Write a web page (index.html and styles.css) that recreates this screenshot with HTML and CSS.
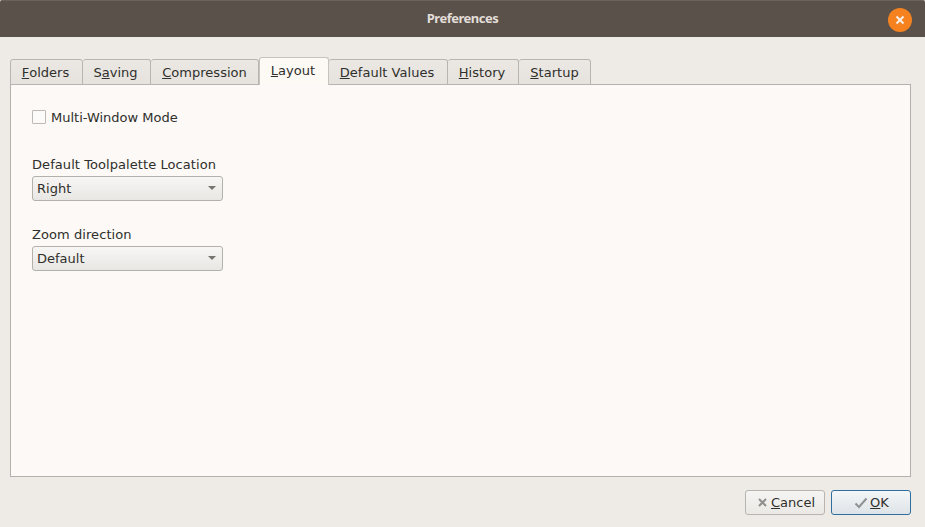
FILE: index.html
```html
<!DOCTYPE html>
<html lang="en">
<head>
<meta charset="utf-8">
<title>Preferences</title>
<link rel="stylesheet" href="styles.css">
</head>
<body>
<div class="window">
  <header class="titlebar">
    <span class="title">Preferences</span>
    <span class="close" aria-label="Close">
      <svg width="10" height="10" viewBox="0 0 10 10"><path d="M1.5 1.5 L8.5 8.5 M8.5 1.5 L1.5 8.5" stroke="#f4f0ea" stroke-width="2" fill="none"/></svg>
    </span>
  </header>
  <main class="content">
    <nav class="tabs">
      <span class="tab t1"><u>F</u>olders</span>
      <span class="tab t2">S<u>a</u>ving</span>
      <span class="tab t3"><u>C</u>ompression</span>
      <span class="tab t4 active"><u>L</u>ayout</span>
      <span class="tab t5"><u>D</u>efault Values</span>
      <span class="tab t6"><u>H</u>istory</span>
      <span class="tab t7"><u>S</u>tartup</span>
    </nav>
    <section class="panel">
      <label class="check"><span class="box"></span>Multi-Window Mode</label>
      <div class="field first">
        <div class="label">Default Toolpalette Location</div>
        <div class="combo"><span>Right</span><span class="arrow"></span></div>
      </div>
      <div class="field">
        <div class="label">Zoom direction</div>
        <div class="combo"><span>Default</span><span class="arrow"></span></div>
      </div>
    </section>
    <footer class="actions">
      <button class="btn">
        <svg width="11" height="11" viewBox="0 0 11 11"><path d="M2 2 L9 9 M9 2 L2 9" stroke="#8f8f8d" stroke-width="2" fill="none"/></svg>
        <span><u>C</u>ancel</span>
      </button>
      <button class="btn primary">
        <svg width="14" height="12" viewBox="0 0 14 12"><path d="M1.5 6.5 L5 10 L12.5 1.5" stroke="#8f9294" stroke-width="2" fill="none"/></svg>
        <span><u>O</u>K</span>
      </button>
    </footer>
  </main>
</div>
</body>
</html>
```
FILE: styles.css
```css
* { box-sizing: border-box; }
html, body { margin: 0; padding: 0; }
body {
  width: 925px;
  height: 527px;
  overflow: hidden;
  background: #eeebe7;
  font-family: "DejaVu Sans", sans-serif;
  font-size: 13px;
  color: #2f2f2b;
}
.window { display: flex; flex-direction: column; height: 527px; }
.titlebar {
  height: 37px;
  flex: none;
  display: flex;
  align-items: center;
  justify-content: center;
  position: relative;
  padding-bottom: 2px;
  background: #5a514b;
  border-top: 1px solid #6a625c;
  border-radius: 2px 2px 0 0;
}
.title {
  font-family: "Noto Sans", sans-serif;
  font-weight: 700;
  font-size: 13px;
  letter-spacing: -0.5px;
  color: #e2ddd8;
}
.close {
  position: absolute;
  right: 13px;
  top: 7px;
  width: 24px;
  height: 24px;
  border-radius: 50%;
  background: #f5821f;
  display: flex;
  align-items: center;
  justify-content: center;
}
.content {
  flex: 1;
  display: flex;
  flex-direction: column;
  padding: 20px 14px 12px 10px;
}
.tabs {
  display: flex;
  align-items: flex-end;
  height: 28px;
  flex: none;
  position: relative;
  z-index: 1;
  margin-bottom: -1px;
}
.tab {
  height: 26px;
  display: flex;
  align-items: center;
  justify-content: center;
  background: linear-gradient(#ebe8e4, #e6e3df);
  border: 1px solid #b8b4af;
  border-left-width: 0;
  border-radius: 3px 3px 0 0;
  padding: 1px 2px 0 0;
  letter-spacing: 0.03px;
  white-space: nowrap;
}
.t1 { width: 73px; border-left-width: 1px; }
.t2 { width: 68px; }
.t3 { width: 108px; padding-right: 0; }
.t4 { width: 70px; }
.t5 { width: 119px; }
.t6 { width: 71px; }
.t7 { width: 72px; padding-right: 0; }
.tab.active {
  height: 28px;
  background: #fdf9f5;
  border-color: #c6c2bd;
  border-left-width: 1px;
  border-bottom: 0;
  padding-top: 0;
  padding-bottom: 2px;
}
.panel {
  height: 393px;
  flex: none;
  background: #fcf9f6;
  border: 1px solid #b4b0ab;
  padding: 24px 21px;
}
.check { display: flex; align-items: center; height: 16px; }
.box {
  width: 14px;
  height: 14px;
  margin-right: 5px;
  background: #fdfbf9;
  border: 1px solid #bdb9b4;
  border-radius: 1px;
}
.field { margin-top: 21px; }
.field.first { margin-top: 27px; }
.label { height: 24px; line-height: 26px; letter-spacing: 0.07px; }
.combo {
  width: 191px;
  height: 25px;
  display: flex;
  align-items: center;
  justify-content: space-between;
  padding: 0 6px 1px 4px;
  border: 1px solid #b4b0ab;
  border-radius: 3px;
  background: linear-gradient(#f8f6f4, #e9e7e4);
}
.arrow {
  width: 0;
  height: 0;
  border-left: 4px solid transparent;
  border-right: 4px solid transparent;
  border-top: 4px solid #77756f;
}
.actions {
  display: flex;
  justify-content: flex-end;
  gap: 6px;
  margin-top: 13px;
}
.btn {
  width: 80px;
  height: 25px;
  display: flex;
  align-items: center;
  justify-content: center;
  gap: 3px;
  padding: 0 0 0 2px;
  font: inherit;
  color: inherit;
  border: 1px solid #b8b4af;
  border-radius: 3px;
  background: linear-gradient(#f6f4f2, #ebe9e6);
}
.btn.primary {
  gap: 2px;
  padding-left: 1px;
  border-color: #2f6f9f;
  background: linear-gradient(#f4f6f7, #dde3e7);
}
```
